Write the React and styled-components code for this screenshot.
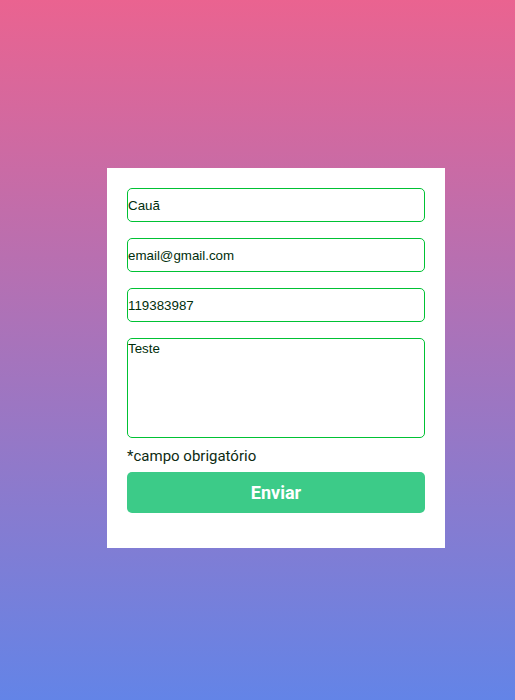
import React from "react";
import styled, { createGlobalStyle } from "styled-components";

const Global = createGlobalStyle`
  html, body { margin: 0; padding: 0; }
  body { font-family: "Liberation Sans", Arial, sans-serif; }
`;

const Page = styled.div`
  min-height: 700px;
  box-sizing: border-box;
  background: linear-gradient(to bottom, #ea6390, #6384e7);
  padding: 168px 0 0 107px;
`;

const Card = styled.form`
  width: 338px;
  box-sizing: border-box;
  background: #ffffff;
  padding: 20px 20px 35px;
  display: flex;
  flex-direction: column;
`;

const Field = styled.input`
  box-sizing: border-box;
  width: 298px;
  height: 34px;
  margin: 0 0 16px;
  padding: 0;
  border: 1px solid #00c234;
  border-radius: 5px;
  background: #fff;
  font-family: "Liberation Sans", Arial, sans-serif;
  font-size: 13.33px;
  color: #012e0c;
  outline: none;
`;

const Area = styled.textarea`
  box-sizing: border-box;
  width: 298px;
  height: 100px;
  margin: 0;
  padding: 2px 0 0 0;
  border: 1px solid #00c234;
  border-radius: 5px;
  background: #fff;
  font-family: "Liberation Sans", Arial, sans-serif;
  font-size: 13.33px;
  color: #012e0c;
  resize: none;
  outline: none;
`;

const Note = styled.p`
  margin: 9px 0 0;
  font-family: Roboto, "Liberation Sans", sans-serif;
  font-size: 15px;
  line-height: 18px;
  color: #0d2a12;
`;

const Submit = styled.button`
  margin-top: 7px;
  width: 298px;
  height: 41px;
  border: none;
  border-radius: 5px;
  background: #3ccb88;
  color: #ffffff;
  font-family: Roboto, "Liberation Sans", sans-serif;
  font-weight: 700;
  font-size: 18px;
  cursor: pointer;
`;

export default function App() {
  return (
    <>
      <Global />
      <Page>
        <Card onSubmit={(e) => e.preventDefault()}>
          <Field defaultValue="Cauã" />
          <Field defaultValue="email@gmail.com" />
          <Field defaultValue="119383987" />
          <Area defaultValue="Teste" />
          <Note>*campo obrigatório</Note>
          <Submit type="submit">Enviar</Submit>
        </Card>
      </Page>
    </>
  );
}
